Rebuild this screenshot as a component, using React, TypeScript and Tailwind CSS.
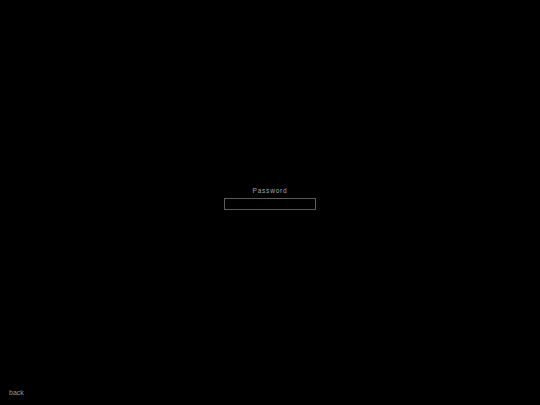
export default function App() {
  return (
    <div
      className="flex h-[405px] w-full flex-col bg-black antialiased"
      style={{ fontFamily: '"Liberation Sans", Arial, sans-serif' }}
    >
      <div className="flex flex-1 flex-col items-center pt-[187px]">
        <label className="text-[6.5px] leading-[8px] tracking-[0.8px] text-[#a8a8a8]">
          Password
        </label>
        <input
          type="password"
          className="mt-[3px] h-[12px] w-[92px] border border-[#5a5a5a] bg-black text-[8px] text-white outline-none"
        />
      </div>
      <div className="pb-[7px] pl-[9px] text-[7px] leading-[10px] text-[#999]">back</div>
    </div>
  );
}
